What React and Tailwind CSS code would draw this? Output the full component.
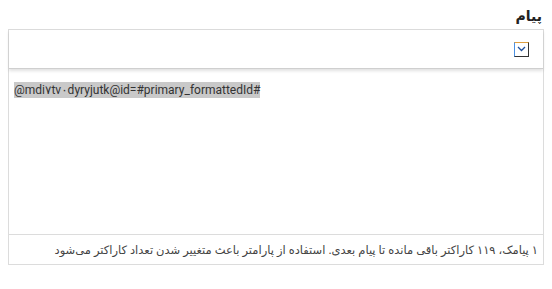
import React from 'react';

function ChevronBox() {
  return (
    <span className="flex h-[15px] w-[15px] items-center justify-center border border-[#333] border-l-[#4a90e2] border-t-[#e0a040]">
      <svg width="9" height="6" viewBox="0 0 9 6" fill="none">
        <path d="M1 1l3.5 3.5L8 1" stroke="#1f4f9a" strokeWidth="1.3" />
      </svg>
    </span>
  );
}

export default function App() {
  return (
    <div dir="rtl" className="h-[289px] w-[552px] bg-white px-2 pt-[7px] font-['Noto_Sans','DejaVu_Sans',sans-serif]">
      <div className="mb-[5px] pr-[2px] text-[14px] font-bold leading-[17px] text-[#222]">پیام</div>
      <div className="border border-[#dcdcdc]">
        <div className="flex h-[39px] items-center border-b border-[#cfcfcf] px-[14px] shadow-[0_2px_3px_rgba(0,0,0,0.12)]">
          <ChevronBox />
        </div>
        <div className="h-[165px] px-[5px] pt-[7px]" dir="ltr">
          <span className="bg-[#c9c9c9] py-[1px] text-[12px] leading-[16px] text-[#333] font-['Roboto','DejaVu_Sans',sans-serif]">
            @mdi۷tv۰dyryjutk@id=#primary_formattedId#
          </span>
        </div>
        <div className="flex h-[30px] items-center border-t border-[#dcdcdc] pr-[5px] text-[11.5px] text-[#444]">
          ۱ پیامک، ۱۱۹ کاراکتر باقی مانده تا پیام بعدی. استفاده از پارامتر باعث متغییر شدن تعداد کاراکتر می‌شود
        </div>
      </div>
    </div>
  );
}
